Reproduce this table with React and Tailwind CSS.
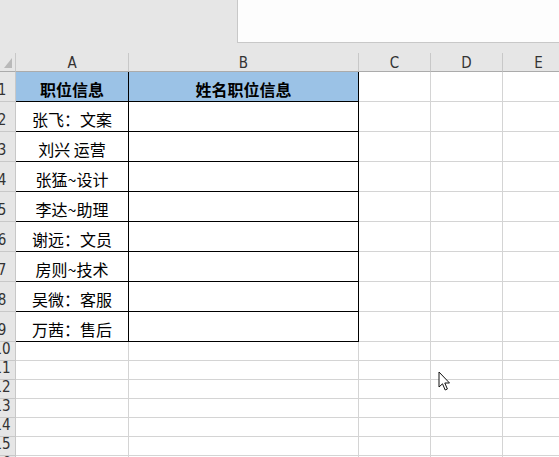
import React from "react";

const cols = ["A", "B", "C", "D", "E"];
const colW = ["w-[113px]", "w-[230px]", "w-[72px]", "w-[72px]", "w-[72px]"];

const rows = [
  { n: 1, h: "h-[30px]", a: "职位信息", b: "姓名职位信息", head: true },
  { n: 2, h: "h-[30px]", a: "张飞：文案" },
  { n: 3, h: "h-[30px]", a: "刘兴 运营" },
  { n: 4, h: "h-[30px]", a: "张猛~设计" },
  { n: 5, h: "h-[30px]", a: "李达~助理" },
  { n: 6, h: "h-[30px]", a: "谢远：文员" },
  { n: 7, h: "h-[30px]", a: "房则~技术" },
  { n: 8, h: "h-[30px]", a: "吴微：客服" },
  { n: 9, h: "h-[30px]", a: "万茜：售后" },
  { n: 10, h: "h-[19px]" },
  { n: 11, h: "h-[19px]" },
  { n: 12, h: "h-[19px]" },
  { n: 13, h: "h-[19px]" },
  { n: 14, h: "h-[19px]" },
  { n: 15, h: "h-[19px]" },
  { n: 16, h: "h-[19px]" },
];

const cjk = "font-['Noto_Sans_CJK_SC','Noto_Sans',sans-serif]";
const latin = "font-['Liberation_Sans_Narrow','DejaVu_Sans_Condensed','Liberation_Sans',sans-serif]";

const Cursor = () => (
  <svg className="absolute left-[438px] top-[371px]" width="14" height="21" viewBox="0 0 14 21">
    <path
      d="M1 1 L1 16 L4.5 12.8 L7.2 19 L9.4 18 L6.8 12 L11.5 12 Z"
      fill="#fff"
      stroke="#111"
      strokeWidth="1"
      strokeLinejoin="miter"
    />
  </svg>
);

const App = () => {
  return (
    <div className="relative w-[559px] h-[457px] overflow-hidden bg-white">
      <div className="h-[53px] bg-[#e6e6e6] flex">
        <div className="w-[237px]" />
        <div className="flex-1 h-[43px] bg-[#fdfdfd] border-l border-b border-[#c8c8c8]" />
      </div>

      <div className="flex h-[19px] bg-[#e6e6e6]">
        <div className="w-[16px] shrink-0 border-r border-b border-r-[#c8c8c8] border-b-[#ababab] flex items-end justify-center pb-[3px]">
          <svg width="8" height="10" viewBox="0 0 8 10">
            <path d="M8 0 L8 10 L0 10 Z" fill="#b9b9b9" />
          </svg>
        </div>
        {cols.map((c, i) => (
          <div
            key={c}
            className={`${colW[i]} shrink-0 border-r border-b border-r-[#c8c8c8] border-b-[#ababab] flex items-end justify-center text-[15px] leading-none text-[#333] ${latin}`}
          >
            {c}
          </div>
        ))}
      </div>

      {rows.map((r) => {
        const boxed = r.n <= 9;
        const cellA = boxed ? "border-black" : "border-[#d4d4d4]";
        return (
          <div key={r.n} className={`flex ${r.h}`}>
            <div className="w-[16px] shrink-0 overflow-hidden bg-[#e6e6e6] border-r border-b border-[#c8c8c8] flex items-end pb-[3px]">
              <div className={`w-[30px] shrink-0 -ml-[13px] text-center text-[15px] leading-none text-[#333] ${latin}`}>
                {r.n}
              </div>
            </div>
            <div
              className={`w-[113px] shrink-0 border-r border-b ${cellA} ${r.head ? "bg-[#9bc2e6] font-bold" : ""} flex items-center justify-center pt-[4px] text-[16px] leading-none text-black ${cjk}`}
            >
              {r.a}
            </div>
            <div
              className={`w-[230px] shrink-0 border-r border-b ${cellA} ${r.head ? "bg-[#9bc2e6] font-bold" : ""} flex items-center justify-center pt-[4px] text-[16px] leading-none text-black ${cjk}`}
            >
              {r.b}
            </div>
            <div className="w-[72px] shrink-0 border-r border-b border-[#d4d4d4]" />
            <div className="w-[72px] shrink-0 border-r border-b border-[#d4d4d4]" />
            <div className="w-[72px] shrink-0 border-r border-b border-[#d4d4d4]" />
          </div>
        );
      })}

      <Cursor />
    </div>
  );
};

export default App;
